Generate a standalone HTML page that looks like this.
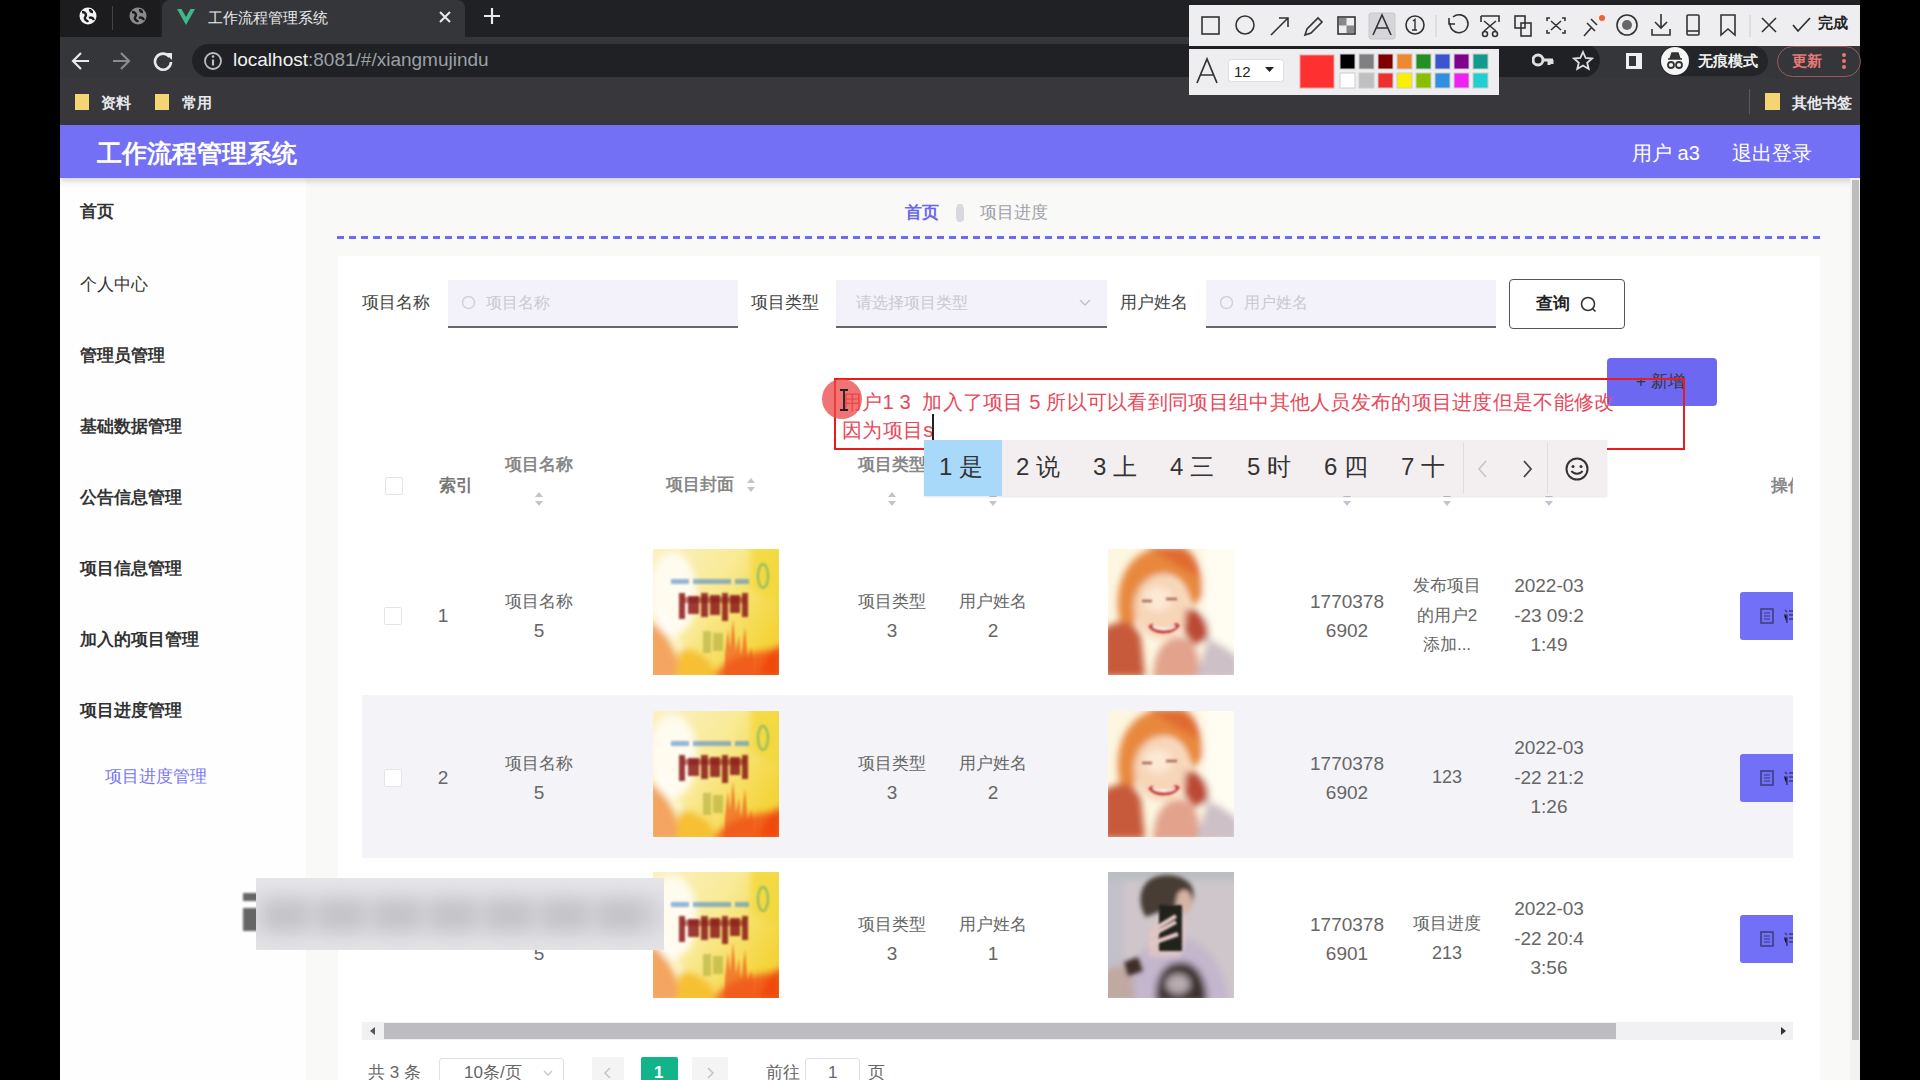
<!DOCTYPE html>
<html><head><meta charset="utf-8">
<style>
*{box-sizing:border-box;margin:0;padding:0}
html,body{width:1920px;height:1080px;overflow:hidden;background:#000;font-family:"Liberation Sans",sans-serif;position:relative}
.a{position:absolute;white-space:nowrap;line-height:1.2}
i{font-style:normal;display:inline-block;width:1em;text-align:center;-webkit-text-stroke-width:.08em}
[style*="bold"] i{-webkit-text-stroke-width:.13em}
.cjk i{-webkit-text-stroke-width:0!important}
.cover,.avw,.avm{width:126px;height:126px}
#tabs{position:absolute;left:60px;top:0;width:1800px;height:37px;background:#202124}
#tool{position:absolute;left:60px;top:37px;width:1800px;height:41px;background:#35363a}
#omni{position:absolute;left:192px;top:44px;width:1408px;height:33px;background:#202124;border-radius:17px}
#bm{position:absolute;left:60px;top:78px;width:1800px;height:47px;background:#38373c}
#hdr{position:absolute;left:60px;top:125px;width:1800px;height:53px;background:#7370f5;box-shadow:0 3px 6px rgba(60,70,50,.22)}
#side{position:absolute;left:60px;top:178px;width:246px;height:902px;background:#fefefe}
#main{position:absolute;left:306px;top:178px;width:1554px;height:902px;background:#f9f9f8}
#card{position:absolute;left:338px;top:256px;width:1482px;height:824px;background:#fff}
</style></head><body>
<div id="tabs"></div>
<div id="tool"></div>
<div id="bm"></div>
<div id="omni"></div>
<div id="side"></div>
<div id="main"></div>
<div id="card"></div>
<div id="hdr"></div>
<svg width="0" height="0" style="position:absolute">
<defs>
<filter id="bl3" x="-20%" y="-20%" width="140%" height="140%"><feGaussianBlur stdDeviation="3.5"/></filter>
<filter id="bl2" x="-20%" y="-20%" width="140%" height="140%"><feGaussianBlur stdDeviation="2"/></filter>
<filter id="bl1" x="-20%" y="-20%" width="140%" height="140%"><feGaussianBlur stdDeviation="0.9"/></filter>
<clipPath id="cp"><rect width="126" height="126"/></clipPath>
<linearGradient id="cg1" x1="0" y1="0" x2="1" y2="0.6"><stop offset="0" stop-color="#fbf1c4"/><stop offset=".5" stop-color="#f9ea96"/><stop offset="1" stop-color="#f4d438"/></linearGradient>
<symbol id="cover" viewBox="0 0 126 126">
<g clip-path="url(#cp)">
<rect width="126" height="126" fill="url(#cg1)"/>
<g filter="url(#bl3)">
<ellipse cx="20" cy="45" rx="24" ry="42" fill="#fffbee"/>
<path d="M-5 72C8 76 22 95 30 130H-5z" fill="#f3a460"/>
<path d="M28 100c15 0 30 8 38 30H22z" fill="#f6c030"/>
<path d="M60 130c8-18 30-28 70-30v30z" fill="#f2661a"/>
<path d="M104 130c5-20 12-30 26-34v34z" fill="#f04810"/>
<path d="M98 -5h35v70c-10-10-25-22-35-25z" fill="#f3d838" opacity=".8"/>
<path d="M8 60c5 15 10 28 20 40" stroke="#fff" stroke-width="6" fill="none" opacity=".7"/>
</g>
<g filter="url(#bl1)">
<path d="M72 106l3-26 2 20 3-30 3 32 3-16 2 22 4-30 3 34 3-14 4 28 3-20 3 24 5-10v40H72z" fill="#f05818" opacity=".7"/>
<path d="M18 30h18v5H18zM40 30h38v5H40zM82 30h14v5H82z" fill="#4a88c8" opacity=".6"/>
<path d="M26 44h6v26h-6zM35 47h11v18H35zM48 44h7v24h-7zM57 46h10v20H57zM69 44h6v28h-6zM77 46h10v18H77zM89 44h6v24h-6z" fill="#8a1a14" opacity=".85"/>
<path d="M30 48h62v6H30z" fill="#8a1a14" opacity=".5"/>
<path d="M50 82h8v22h-8zM60 84h10v18H60z" fill="#a8a838" opacity=".55"/>
<ellipse cx="110" cy="27" rx="5" ry="12" fill="none" stroke="#40a080" stroke-width="2" opacity=".6"/>
</g>
</g>
</symbol>
<symbol id="avw" viewBox="0 0 126 126">
<g clip-path="url(#cp)">
<rect width="126" height="126" fill="#fdf6e0"/>
<g filter="url(#bl3)">
<rect x="96" y="-5" width="35" height="136" fill="#fffcf2"/>
<path d="M10 60C8 20 30 -2 58 -2c25 0 40 18 36 50l-10 10C80 35 70 25 55 25 38 25 30 40 28 60l-2 18-14-2z" fill="#e8883c"/>
<path d="M40 -2h35c10 5 15 15 18 30L75 20z" fill="#e06a30"/>
<ellipse cx="53" cy="58" rx="27" ry="32" fill="#f7d6b8"/>
<ellipse cx="50" cy="50" rx="14" ry="12" fill="#fde8d4"/>
<path d="M-5 80c15-10 30-10 38 8l4 40H-5z" fill="#c65a3a"/>
<path d="M78 60c14 0 25 12 22 30l-14 6-10-14z" fill="#bc4834"/>
<path d="M45 130c0-22 8-40 25-42 18 0 22 20 22 42z" fill="#e2a28c"/>
<path d="M88 130l12-40c12 4 22 12 30 18v22z" fill="#cdc0c6"/>
</g>
<g filter="url(#bl1)">
<path d="M42 76c6 8 22 8 28-1" stroke="#c83838" stroke-width="5" fill="none"/>
<path d="M45 77c5 4 17 4 22 0" stroke="#fff" stroke-width="2" fill="none"/>
<path d="M34 52h10M58 50h11" stroke="#a06858" stroke-width="2.5"/>
</g>
</g>
</symbol>
<symbol id="avm" viewBox="0 0 126 126">
<g clip-path="url(#cp)">
<rect width="126" height="126" fill="#cec6ca"/>
<g filter="url(#bl3)">
<rect x="-5" y="-5" width="136" height="13" fill="#b9bec2"/>
<rect x="-5" y="8" width="20" height="120" fill="#c2c0c8"/>
<path d="M15 130c2-35 20-62 50-66 32 2 52 30 56 66z" fill="#c4b6cc"/>
<path d="M48 130c-2-25 8-40 25-40s26 18 26 40z" fill="#3c322e"/>
<ellipse cx="70" cy="112" rx="12" ry="10" fill="#b8aab0"/>
<path d="M-5 102c8-8 18-10 28-6l4 34H-5z" fill="#c0a49a" opacity=".85"/>
</g>
<g filter="url(#bl2)">
<path d="M38 45c-8-12-8-30 5-38 12-7 32-5 40 6 5 8 2 20-4 28l-10-8z" fill="#463c34"/>
<ellipse cx="76" cy="30" rx="8" ry="12" fill="#d6b4a4"/>
<path d="M42 85c-4-12-2-30 6-36l28-4c4 8 2 30-4 40z" fill="#dcc4c4"/>
<path d="M16 90l14-5 5 14-15 5z" fill="#3e2e28"/>
</g>
<rect x="51" y="33" width="23" height="46" rx="1" fill="#23211f" filter="url(#bl1)"/>
<path d="M42 64l26-14M42 72l28-10M48 56l20-12" stroke="#e4c8c4" stroke-width="4" filter="url(#bl1)"/>
</g>
</symbol>
</defs></svg>
<!-- pinned tabs area -->
<div class="a" style="left:60px;top:0;width:100px;height:37px;background:#1c1c1e"></div>
<svg class="a" style="left:78px;top:6px" width="20" height="20" viewBox="0 0 20 20"><circle cx="10" cy="10" r="8.5" fill="#f2f2f2"/><path d="M4 6c2 0 4 1 4 3s-2 2-1 4 2 1 3 3M12 3c0 2 1 3 3 3M11 12c2-1 4 0 5 2" stroke="#1c1c1e" stroke-width="2.4" fill="none"/></svg>
<div class="a" style="left:112px;top:6px;width:1px;height:24px;background:#444"></div>
<svg class="a" style="left:128px;top:6px" width="20" height="20" viewBox="0 0 20 20"><circle cx="10" cy="10" r="8.5" fill="#8a8a8a"/><path d="M4 6c2 0 4 1 4 3s-2 2-1 4 2 1 3 3M12 3c0 2 1 3 3 3M11 12c2-1 4 0 5 2" stroke="#1c1c1e" stroke-width="2.4" fill="none"/></svg>
<!-- active tab -->
<div class="a" style="left:162px;top:0;width:303px;height:37px;background:#35363a;border-radius:8px 8px 0 0"></div>
<svg class="a" style="left:176px;top:8px" width="20" height="18" viewBox="0 0 20 18"><path d="M1 1h4.5L10 9l4.5-8H19L10 17z" fill="#3fb88a"/></svg>
<div class="a" style="left:208px;top:9px;font-size:15px;color:#e8eaed"><i>工</i><i>作</i><i>流</i><i>程</i><i>管</i><i>理</i><i>系</i><i>统</i></div>
<svg class="a" style="left:438px;top:10px" width="14" height="14" viewBox="0 0 14 14"><path d="M2 2l10 10M12 2L2 12" stroke="#e8eaed" stroke-width="2"/></svg>
<svg class="a" style="left:483px;top:7px" width="18" height="18" viewBox="0 0 18 18"><path d="M9 1v16M1 9h16" stroke="#e8eaed" stroke-width="2.2"/></svg>
<!-- nav icons -->
<svg class="a" style="left:70px;top:50px" width="22" height="22" viewBox="0 0 22 22"><path d="M19 11H4M11 3l-8 8 8 8" stroke="#e8eaed" stroke-width="2.2" fill="none"/></svg>
<svg class="a" style="left:110px;top:50px" width="22" height="22" viewBox="0 0 22 22"><path d="M3 11h15M11 3l8 8-8 8" stroke="#8a8b8e" stroke-width="2.2" fill="none"/></svg>
<svg class="a" style="left:152px;top:50px" width="22" height="22" viewBox="0 0 22 22"><path d="M17.5 7A8 8 0 1 0 19 12" stroke="#e8eaed" stroke-width="2.6" fill="none"/><path d="M13 3h7v7z" fill="#e8eaed"/></svg>
<svg class="a" style="left:202px;top:50px" width="22" height="22" viewBox="0 0 22 22"><circle cx="11" cy="11" r="8" stroke="#bdbdbd" stroke-width="1.8" fill="none"/><path d="M11 9.5v6" stroke="#bdbdbd" stroke-width="2.2"/><circle cx="11" cy="6.5" r="1.3" fill="#bdbdbd"/></svg>
<div class="a" style="left:233px;top:49px;font-size:19px;color:#f1f1f1">localhost<span style="color:#9aa0a6">:8081/#/xiangmujindu</span></div>
<!-- omnibox right icons -->
<svg class="a" style="left:1532px;top:52px" width="22" height="16" viewBox="0 0 22 16"><circle cx="6" cy="8" r="5" stroke="#e0e0e0" stroke-width="3" fill="none"/><path d="M10 8h11M17 8v5M20 8v4" stroke="#e0e0e0" stroke-width="3"/></svg>
<svg class="a" style="left:1572px;top:50px" width="22" height="22" viewBox="0 0 22 22"><path d="M11 2l2.7 6 6.3.5-4.8 4.2 1.5 6.3L11 15.6 5.3 19l1.5-6.3L2 8.5 8.3 8z" stroke="#e0e0e0" stroke-width="1.8" fill="none"/></svg>
<svg class="a" style="left:1624px;top:51px" width="20" height="20" viewBox="0 0 20 20"><rect x="2" y="2" width="16" height="16" fill="#f0f0f0"/><rect x="5" y="5" width="7" height="10" fill="#35363a"/></svg>
<div class="a" style="left:1660px;top:46px;width:108px;height:30px;background:#242528;border-radius:15px"></div>
<svg class="a" style="left:1660px;top:46px" width="30" height="30" viewBox="0 0 30 30"><circle cx="15" cy="15" r="14" fill="#f5f5f5"/><path d="M8 13h14M10 13l2-6h6l2 6" fill="#333" stroke="#333" stroke-width="1.5"/><circle cx="11" cy="19" r="3" stroke="#333" stroke-width="1.8" fill="none"/><circle cx="19" cy="19" r="3" stroke="#333" stroke-width="1.8" fill="none"/></svg>
<div class="a" style="left:1698px;top:52px;font-size:15px;color:#f0f0f0;font-weight:bold"><i>无</i><i>痕</i><i>模</i><i>式</i></div>
<div class="a" style="left:1777px;top:46px;width:84px;height:31px;border:1.5px solid #9a5a5e;border-radius:16px"></div>
<div class="a" style="left:1792px;top:52px;font-size:15px;color:#e87878;font-weight:bold"><i>更</i><i>新</i></div>
<svg class="a" style="left:1840px;top:51px" width="8" height="20" viewBox="0 0 8 20"><circle cx="4" cy="4" r="2" fill="#e87878"/><circle cx="4" cy="10" r="2" fill="#e87878"/><circle cx="4" cy="16" r="2" fill="#e87878"/></svg>
<!-- bookmarks -->
<div class="a" style="left:75px;top:94px;width:14px;height:16px;background:#f3d673"></div>
<div class="a" style="left:101px;top:94px;font-size:15px;color:#e8eaed;font-weight:bold"><i>资</i><i>料</i></div>
<div class="a" style="left:155px;top:94px;width:14px;height:16px;background:#f3d673"></div>
<div class="a" style="left:182px;top:94px;font-size:15px;color:#e8eaed;font-weight:bold"><i>常</i><i>用</i></div>
<div class="a" style="left:1749px;top:89px;width:1px;height:25px;background:#5a5a5e"></div>
<div class="a" style="left:1765px;top:93px;width:15px;height:17px;background:#f3d673"></div>
<div class="a" style="left:1792px;top:94px;font-size:15px;color:#e8eaed;font-weight:bold"><i>其</i><i>他</i><i>书</i><i>签</i></div>
<div class="a" style="left:1189px;top:5px;width:671px;height:41px;background:#eeeef1"></div>
<div class="a" style="left:1189px;top:49px;width:310px;height:46px;background:#eeeef1"></div>
<svg class="a" style="left:1189px;top:5px" width="671" height="41" viewBox="0 0 671 41" fill="none" stroke="#333" stroke-width="1.6">
<rect x="13" y="12" width="17" height="17"/>
<circle cx="56" cy="20" r="9"/>
<path d="M82 30L99 13M90 13h9v9"/>
<path d="M116 30l2-6 11-11 4 4-11 11z"/>
<rect x="149" y="12" width="17" height="17"/><rect x="150" y="13" width="7.5" height="7.5" fill="#888" stroke="none"/><rect x="157.5" y="20.5" width="7.5" height="7.5" fill="#888" stroke="none"/>
<rect x="180" y="8" width="26" height="26" rx="2" fill="#d6d6da" stroke="#c8c8cc" stroke-width="1"/>
<path d="M184 30l9-20 9 20M187 23h12"/>
<circle cx="226" cy="20" r="9"/><path d="M224 16l2-1.5v10M223 25h5" stroke-width="1.4"/>
<path d="M247 10v22" stroke="#ccc" stroke-width="1"/>
<path d="M260 13v6h6M261 18a9 9 0 1 0 3-6"/>
<path d="M292 11h18v6M292 11v6M295 16l12 10M307 16l-12 10"/><circle cx="296" cy="29" r="2.5"/><circle cx="306" cy="29" r="2.5"/>
<rect x="326" y="11" width="10" height="12"/><rect x="332" y="18" width="10" height="13"/>
<path d="M361 13h-3v3M373 13h3v3M361 28h-3v-3M373 28h3v-3M362 16l10 9M372 16l-10 9"/>
<path d="M395 31l8-9M398 18l8 8M402 14l6 6" /><circle cx="413" cy="13" r="3" fill="#f06030" stroke="none"/>
<circle cx="438" cy="20" r="10"/><circle cx="438" cy="20" r="5" fill="#666" stroke="none"/>
<path d="M472 9v14M466 17l6 6 6-6M463 24v6h18v-6"/>
<rect x="498" y="10" width="12" height="20" rx="1"/><path d="M498 26h12"/>
<path d="M532 10h14v20l-7-6-7 6z"/>
<path d="M561 10v22" stroke="#ccc" stroke-width="1"/>
<path d="M573 13l14 14M587 13l-14 14"/>
<path d="M604 20l5 6 12-13" stroke-width="1.8"/>
</svg>
<div class="a" style="left:1818px;top:14px;font-size:15px;color:#222;font-weight:bold"><i>完</i><i>成</i></div>
<svg class="a" style="left:1189px;top:49px" width="310" height="46" viewBox="0 0 310 46">
<path d="M8 34l10-24 10 24M11 26h14" stroke="#333" stroke-width="1.7" fill="none"/>
<rect x="39.5" y="10.5" width="55" height="22" rx="3" fill="#fff" stroke="#ddd"/>
<text x="45" y="28" font-size="15" font-family="Liberation Sans" fill="#222">12</text>
<path d="M76 18h9l-4.5 5z" fill="#222"/>
<rect x="111" y="6" width="34" height="33" fill="#ff3030" stroke="#e8a0a0"/>
<g stroke="#ccc" stroke-width="1">
<rect x="151" y="5" width="15" height="15" fill="#000"/><rect x="170" y="5" width="15" height="15" fill="#808080"/><rect x="189" y="5" width="15" height="15" fill="#800000"/><rect x="208" y="5" width="15" height="15" fill="#f08830"/><rect x="227" y="5" width="15" height="15" fill="#229022"/><rect x="246" y="5" width="15" height="15" fill="#3a55d0"/><rect x="265" y="5" width="15" height="15" fill="#800090"/><rect x="284" y="5" width="15" height="15" fill="#109a90"/>
<rect x="151" y="24" width="15" height="15" fill="#fff"/><rect x="170" y="24" width="15" height="15" fill="#c0c0c0"/><rect x="189" y="24" width="15" height="15" fill="#f03030"/><rect x="208" y="24" width="15" height="15" fill="#f8f000"/><rect x="227" y="24" width="15" height="15" fill="#88c000"/><rect x="246" y="24" width="15" height="15" fill="#3090e0"/><rect x="265" y="24" width="15" height="15" fill="#f020f0"/><rect x="284" y="24" width="15" height="15" fill="#20d0d0"/>
</g>
</svg>
<!-- header -->
<div class="a" style="left:97px;top:138px;font-size:25px;color:#fff;font-weight:bold"><i>工</i><i>作</i><i>流</i><i>程</i><i>管</i><i>理</i><i>系</i><i>统</i></div>
<div class="a" style="left:1632px;top:141px;font-size:20px;color:#fff"><i>用</i><i>户</i> a3</div>
<div class="a" style="left:1732px;top:141px;font-size:20px;color:#fff"><i>退</i><i>出</i><i>登</i><i>录</i></div>
<!-- sidebar -->
<div class="a" style="left:80px;top:202px;font-size:17px;color:#333;font-weight:bold"><i>首</i><i>页</i></div>
<div class="a" style="left:80px;top:275px;font-size:17px;color:#333"><i>个</i><i>人</i><i>中</i><i>心</i></div>
<div class="a" style="left:80px;top:346px;font-size:17px;color:#333;font-weight:bold"><i>管</i><i>理</i><i>员</i><i>管</i><i>理</i></div>
<div class="a" style="left:80px;top:417px;font-size:17px;color:#333;font-weight:bold"><i>基</i><i>础</i><i>数</i><i>据</i><i>管</i><i>理</i></div>
<div class="a" style="left:80px;top:488px;font-size:17px;color:#333;font-weight:bold"><i>公</i><i>告</i><i>信</i><i>息</i><i>管</i><i>理</i></div>
<div class="a" style="left:80px;top:559px;font-size:17px;color:#333;font-weight:bold"><i>项</i><i>目</i><i>信</i><i>息</i><i>管</i><i>理</i></div>
<div class="a" style="left:80px;top:630px;font-size:17px;color:#333;font-weight:bold"><i>加</i><i>入</i><i>的</i><i>项</i><i>目</i><i>管</i><i>理</i></div>
<div class="a" style="left:80px;top:701px;font-size:17px;color:#333;font-weight:bold"><i>项</i><i>目</i><i>进</i><i>度</i><i>管</i><i>理</i></div>
<div class="a" style="left:105px;top:767px;font-size:17px;color:#7a76f0"><i>项</i><i>目</i><i>进</i><i>度</i><i>管</i><i>理</i></div>
<!-- breadcrumb -->
<div class="a" style="left:905px;top:203px;font-size:17px;color:#6d69e8;font-weight:bold"><i>首</i><i>页</i></div>
<svg class="a" style="left:952px;top:202px" width="16" height="22" viewBox="0 0 16 22"><path d="M6 2h4l2 4v12l-3 2H6L4 16V6z" fill="#d8d8de"/></svg>
<div class="a" style="left:980px;top:203px;font-size:17px;color:#a0a0a8"><i>项</i><i>目</i><i>进</i><i>度</i></div>
<div class="a" style="left:337px;top:236px;width:1483px;height:3px;background:repeating-linear-gradient(90deg,#6f6bf0 0 7px,transparent 7px 12px)"></div>
<!-- search form -->
<div class="a" style="left:362px;top:293px;font-size:17px;color:#444"><i>项</i><i>目</i><i>名</i><i>称</i></div>
<div class="a" style="left:448px;top:280px;width:290px;height:48px;background:#f3f2fa;border-bottom:2px solid #666"></div>
<svg class="a" style="left:461px;top:295px" width="16" height="16" viewBox="0 0 16 16"><circle cx="7.5" cy="7.5" r="6" stroke="#d0d0d8" stroke-width="1.5" fill="none"/></svg>
<div class="a" style="left:486px;top:293px;font-size:16px;color:#c9c9d2"><i>项</i><i>目</i><i>名</i><i>称</i></div>
<div class="a" style="left:751px;top:293px;font-size:17px;color:#444"><i>项</i><i>目</i><i>类</i><i>型</i></div>
<div class="a" style="left:836px;top:280px;width:271px;height:48px;background:#f3f2fa;border-bottom:2px solid #666"></div>
<div class="a" style="left:856px;top:293px;font-size:16px;color:#c9c9d2"><i>请</i><i>选</i><i>择</i><i>项</i><i>目</i><i>类</i><i>型</i></div>
<svg class="a" style="left:1079px;top:298px" width="12" height="10" viewBox="0 0 12 10"><path d="M1 2l5 5 5-5" stroke="#c0c0c8" stroke-width="1.4" fill="none"/></svg>
<div class="a" style="left:1120px;top:293px;font-size:17px;color:#444"><i>用</i><i>户</i><i>姓</i><i>名</i></div>
<div class="a" style="left:1206px;top:280px;width:290px;height:48px;background:#f3f2fa;border-bottom:2px solid #666"></div>
<svg class="a" style="left:1219px;top:295px" width="16" height="16" viewBox="0 0 16 16"><circle cx="7.5" cy="7.5" r="6" stroke="#d0d0d8" stroke-width="1.5" fill="none"/></svg>
<div class="a" style="left:1244px;top:293px;font-size:16px;color:#c9c9d2"><i>用</i><i>户</i><i>姓</i><i>名</i></div>
<div class="a" style="left:1509px;top:279px;width:116px;height:50px;background:#fff;border:1.5px solid #555;border-radius:4px"></div>
<div class="a" style="left:1536px;top:294px;font-size:17px;color:#222;font-weight:bold"><i>查</i><i>询</i></div>
<svg class="a" style="left:1579px;top:295px" width="20" height="20" viewBox="0 0 20 20"><circle cx="9" cy="9" r="6.5" stroke="#333" stroke-width="1.6" fill="none"/><path d="M13.5 13.5l3 3" stroke="#333" stroke-width="1.6"/></svg>
<!-- add button -->
<div class="a" style="left:1607px;top:358px;width:110px;height:48px;background:#6c68f2;border-radius:4px"></div>
<div class="a" style="left:1636px;top:372px;font-size:17px;color:#333">+ <span><i>新</i><i>增</i></span></div>
<div class="a" style="left:385px;top:477px;width:18px;height:18px;border:1px solid #e4e4ea;border-radius:2px;background:#fff"></div>
<div class="a" style="left:156px;width:600px;text-align:center;top:476px;font-size:17px;color:#777;font-weight:bold"><i>索</i><i>引</i></div>
<div class="a" style="left:239px;width:600px;text-align:center;top:455px;font-size:17px;color:#888;font-weight:bold"><i>项</i><i>目</i><i>名</i><i>称</i></div>
<svg class="a" style="left:534px;top:491px" width="10" height="16" viewBox="0 0 10 16"><path d="M5 1l4 5H1zM5 15l4-5H1z" fill="#c0c4cc"/></svg>
<div class="a" style="left:400px;width:600px;text-align:center;top:475px;font-size:17px;color:#888;font-weight:bold"><i>项</i><i>目</i><i>封</i><i>面</i></div>
<svg class="a" style="left:746px;top:477px" width="10" height="16" viewBox="0 0 10 16"><path d="M5 1l4 5H1zM5 15l4-5H1z" fill="#c0c4cc"/></svg>
<div class="a" style="left:592px;width:600px;text-align:center;top:455px;font-size:17px;color:#888;font-weight:bold"><i>项</i><i>目</i><i>类</i><i>型</i></div>
<svg class="a" style="left:887px;top:491px" width="10" height="16" viewBox="0 0 10 16"><path d="M5 1l4 5H1zM5 15l4-5H1z" fill="#c0c4cc"/></svg>
<div class="a" style="left:693px;width:600px;text-align:center;top:455px;font-size:17px;color:#888;font-weight:bold"><i>用</i><i>户</i><i>姓</i><i>名</i></div>
<svg class="a" style="left:988px;top:491px" width="10" height="16" viewBox="0 0 10 16"><path d="M5 1l4 5H1zM5 15l4-5H1z" fill="#c0c4cc"/></svg>
<svg class="a" style="left:1342px;top:491px" width="10" height="16" viewBox="0 0 10 16"><path d="M5 1l4 5H1zM5 15l4-5H1z" fill="#c0c4cc"/></svg>
<svg class="a" style="left:1442px;top:491px" width="10" height="16" viewBox="0 0 10 16"><path d="M5 1l4 5H1zM5 15l4-5H1z" fill="#c0c4cc"/></svg>
<svg class="a" style="left:1544px;top:491px" width="10" height="16" viewBox="0 0 10 16"><path d="M5 1l4 5H1zM5 15l4-5H1z" fill="#c0c4cc"/></svg>
<div class="a" style="left:1771px;top:476px;width:22px;overflow:hidden;font-size:17px;color:#888;font-weight:bold"><i>操</i><i>作</i></div>
<div class="a" style="left:384px;top:607px;width:18px;height:18px;border:1px solid #e4e4ea;border-radius:2px;background:#fff"></div>
<div class="a " style="left:143px;width:600px;text-align:center;top:605px;font-size:19px;color:#666;">1</div>
<div class="a" style="left:239px;width:600px;text-align:center;top:592px;font-size:17px;color:#666;"><i>项</i><i>目</i><i>名</i><i>称</i></div>
<div class="a " style="left:239px;width:600px;text-align:center;top:620px;font-size:19px;color:#666;">5</div>
<svg class="a" style="left:653px;top:549px" width="126" height="126"><use href="#cover"/></svg>
<div class="a" style="left:592px;width:600px;text-align:center;top:592px;font-size:17px;color:#666;"><i>项</i><i>目</i><i>类</i><i>型</i></div>
<div class="a " style="left:592px;width:600px;text-align:center;top:620px;font-size:19px;color:#666;">3</div>
<div class="a" style="left:693px;width:600px;text-align:center;top:592px;font-size:17px;color:#666;"><i>用</i><i>户</i><i>姓</i><i>名</i></div>
<div class="a " style="left:693px;width:600px;text-align:center;top:620px;font-size:19px;color:#666;">2</div>
<svg class="a" style="left:1108px;top:549px" width="126" height="126"><use href="#avw"/></svg>
<div class="a " style="left:1047px;width:600px;text-align:center;top:591px;font-size:19px;color:#666;">1770378</div>
<div class="a " style="left:1047px;width:600px;text-align:center;top:620px;font-size:19px;color:#666;">6902</div>
<div class="a" style="left:1147px;width:600px;text-align:center;top:576px;font-size:17px;color:#666;"><i>发</i><i>布</i><i>项</i><i>目</i></div>
<div class="a" style="left:1147px;width:600px;text-align:center;top:606px;font-size:17px;color:#666;"><i>的</i><i>用</i><i>户</i>2</div>
<div class="a" style="left:1147px;width:600px;text-align:center;top:635px;font-size:17px;color:#666;"><i>添</i><i>加</i>...</div>
<div class="a " style="left:1249px;width:600px;text-align:center;top:575px;font-size:19px;color:#666;">2022-03</div>
<div class="a " style="left:1249px;width:600px;text-align:center;top:605px;font-size:19px;color:#666;">-23 09:2</div>
<div class="a " style="left:1249px;width:600px;text-align:center;top:634px;font-size:19px;color:#666;">1:49</div>
<div class="a" style="left:1740px;top:592px;width:53px;height:48px;background:#7270f6;border-radius:3px 0 0 3px"></div>
<svg class="a" style="left:1760px;top:607px" width="33" height="18" viewBox="0 0 33 18"><rect x="1" y="2" width="12" height="14" fill="none" stroke="#3c3a78" stroke-width="1.5"/><path d="M4 6h6M4 9h6M4 12h6" stroke="#3c3a78" stroke-width="1"/><path d="M25 3l2 2M24 8h3v8M29 4h4M29 8h4M29 12h4" stroke="#3c3a78" stroke-width="1.5"/></svg>
<div class="a" style="left:362px;top:695px;width:1431px;height:163px;background:#f4f4f8"></div>
<div class="a" style="left:384px;top:769px;width:18px;height:18px;border:1px solid #e4e4ea;border-radius:2px;background:#fff"></div>
<div class="a " style="left:143px;width:600px;text-align:center;top:767px;font-size:19px;color:#666;">2</div>
<div class="a" style="left:239px;width:600px;text-align:center;top:754px;font-size:17px;color:#666;"><i>项</i><i>目</i><i>名</i><i>称</i></div>
<div class="a " style="left:239px;width:600px;text-align:center;top:782px;font-size:19px;color:#666;">5</div>
<svg class="a" style="left:653px;top:711px" width="126" height="126"><use href="#cover"/></svg>
<div class="a" style="left:592px;width:600px;text-align:center;top:754px;font-size:17px;color:#666;"><i>项</i><i>目</i><i>类</i><i>型</i></div>
<div class="a " style="left:592px;width:600px;text-align:center;top:782px;font-size:19px;color:#666;">3</div>
<div class="a" style="left:693px;width:600px;text-align:center;top:754px;font-size:17px;color:#666;"><i>用</i><i>户</i><i>姓</i><i>名</i></div>
<div class="a " style="left:693px;width:600px;text-align:center;top:782px;font-size:19px;color:#666;">2</div>
<svg class="a" style="left:1108px;top:711px" width="126" height="126"><use href="#avw"/></svg>
<div class="a " style="left:1047px;width:600px;text-align:center;top:753px;font-size:19px;color:#666;">1770378</div>
<div class="a " style="left:1047px;width:600px;text-align:center;top:782px;font-size:19px;color:#666;">6902</div>
<div class="a " style="left:1147px;width:600px;text-align:center;top:767px;font-size:18px;color:#666;">123</div>
<div class="a " style="left:1249px;width:600px;text-align:center;top:737px;font-size:19px;color:#666;">2022-03</div>
<div class="a " style="left:1249px;width:600px;text-align:center;top:767px;font-size:19px;color:#666;">-22 21:2</div>
<div class="a " style="left:1249px;width:600px;text-align:center;top:796px;font-size:19px;color:#666;">1:26</div>
<div class="a" style="left:1740px;top:754px;width:53px;height:48px;background:#7270f6;border-radius:3px 0 0 3px"></div>
<svg class="a" style="left:1760px;top:769px" width="33" height="18" viewBox="0 0 33 18"><rect x="1" y="2" width="12" height="14" fill="none" stroke="#3c3a78" stroke-width="1.5"/><path d="M4 6h6M4 9h6M4 12h6" stroke="#3c3a78" stroke-width="1"/><path d="M25 3l2 2M24 8h3v8M29 4h4M29 8h4M29 12h4" stroke="#3c3a78" stroke-width="1.5"/></svg>
<div class="a" style="left:384px;top:930px;width:18px;height:18px;border:1px solid #e4e4ea;border-radius:2px;background:#fff"></div>
<div class="a " style="left:143px;width:600px;text-align:center;top:928px;font-size:19px;color:#666;">3</div>
<div class="a" style="left:239px;width:600px;text-align:center;top:915px;font-size:17px;color:#666;"><i>项</i><i>目</i><i>名</i><i>称</i></div>
<div class="a " style="left:239px;width:600px;text-align:center;top:943px;font-size:19px;color:#666;">5</div>
<svg class="a" style="left:653px;top:872px" width="126" height="126"><use href="#cover"/></svg>
<div class="a" style="left:592px;width:600px;text-align:center;top:915px;font-size:17px;color:#666;"><i>项</i><i>目</i><i>类</i><i>型</i></div>
<div class="a " style="left:592px;width:600px;text-align:center;top:943px;font-size:19px;color:#666;">3</div>
<div class="a" style="left:693px;width:600px;text-align:center;top:915px;font-size:17px;color:#666;"><i>用</i><i>户</i><i>姓</i><i>名</i></div>
<div class="a " style="left:693px;width:600px;text-align:center;top:943px;font-size:19px;color:#666;">1</div>
<svg class="a" style="left:1108px;top:872px" width="126" height="126"><use href="#avm"/></svg>
<div class="a " style="left:1047px;width:600px;text-align:center;top:914px;font-size:19px;color:#666;">1770378</div>
<div class="a " style="left:1047px;width:600px;text-align:center;top:943px;font-size:19px;color:#666;">6901</div>
<div class="a" style="left:1147px;width:600px;text-align:center;top:914px;font-size:17px;color:#666;"><i>项</i><i>目</i><i>进</i><i>度</i></div>
<div class="a " style="left:1147px;width:600px;text-align:center;top:943px;font-size:18px;color:#666;">213</div>
<div class="a " style="left:1249px;width:600px;text-align:center;top:898px;font-size:19px;color:#666;">2022-03</div>
<div class="a " style="left:1249px;width:600px;text-align:center;top:928px;font-size:19px;color:#666;">-22 20:4</div>
<div class="a " style="left:1249px;width:600px;text-align:center;top:957px;font-size:19px;color:#666;">3:56</div>
<div class="a" style="left:1740px;top:915px;width:53px;height:48px;background:#7270f6;border-radius:3px 0 0 3px"></div>
<svg class="a" style="left:1760px;top:930px" width="33" height="18" viewBox="0 0 33 18"><rect x="1" y="2" width="12" height="14" fill="none" stroke="#3c3a78" stroke-width="1.5"/><path d="M4 6h6M4 9h6M4 12h6" stroke="#3c3a78" stroke-width="1"/><path d="M25 3l2 2M24 8h3v8M29 4h4M29 8h4M29 12h4" stroke="#3c3a78" stroke-width="1.5"/></svg>
<!-- annotation -->
<div class="a" style="left:834px;top:378px;width:851px;height:72px;border:2px solid #e81c1c"></div>
<div class="a" style="left:842px;top:388px;font-size:20.3px;color:#e8485a;line-height:28px;white-space:pre"><i>用</i><i>户</i>1 3  <i>加</i><i>入</i><i>了</i><i>项</i><i>目</i> 5 <i>所</i><i>以</i><i>可</i><i>以</i><i>看</i><i>到</i><i>同</i><i>项</i><i>目</i><i>组</i><i>中</i><i>其</i><i>他</i><i>人</i><i>员</i><i>发</i><i>布</i><i>的</i><i>项</i><i>目</i><i>进</i><i>度</i><i>但</i><i>是</i><i>不</i><i>能</i><i>修</i><i>改</i><br><i>因</i><i>为</i><i>项</i><i>目</i>s</div>
<div class="a" style="left:932px;top:414px;width:2px;height:26px;background:#222"></div>
<div class="a" style="left:822px;top:379px;width:40px;height:40px;border-radius:50%;background:rgba(236,70,70,.75)"></div>
<svg class="a" style="left:838px;top:388px" width="12" height="24" viewBox="0 0 12 24"><path d="M2 2h8M6 2v20M2 22h8" stroke="#222" stroke-width="1.8"/></svg>
<!-- IME -->
<div class="a" style="left:924px;top:440px;width:683px;height:56px;background:#f3eff1;box-shadow:0 1px 2px rgba(0,0,0,.1)"></div>
<div class="a" style="left:924px;top:440px;width:78px;height:56px;background:#a9d9f9"></div>
<div class="a" style="left:1463px;top:442px;width:1px;height:52px;background:#e2dde0"></div>
<div class="a" style="left:1547px;top:442px;width:1px;height:52px;background:#e2dde0"></div>
<div class="a" style="left:939px;top:453px;font-size:24px;color:#333;word-spacing:0">1 <i>是</i></div>
<div class="a" style="left:1016px;top:453px;font-size:24px;color:#333">2 <i>说</i></div>
<div class="a" style="left:1093px;top:453px;font-size:24px;color:#333">3 <i>上</i></div>
<div class="a" style="left:1170px;top:453px;font-size:24px;color:#333">4 <i>三</i></div>
<div class="a" style="left:1247px;top:453px;font-size:24px;color:#333">5 <i>时</i></div>
<div class="a" style="left:1324px;top:453px;font-size:24px;color:#333">6 <i>四</i></div>
<div class="a" style="left:1401px;top:453px;font-size:24px;color:#333">7 <i>十</i></div>
<svg class="a" style="left:1476px;top:459px" width="14" height="20" viewBox="0 0 14 20"><path d="M10 2L3 10l7 8" stroke="#c8c4c8" stroke-width="1.6" fill="none"/></svg>
<svg class="a" style="left:1520px;top:459px" width="14" height="20" viewBox="0 0 14 20"><path d="M4 2l7 8-7 8" stroke="#444" stroke-width="1.8" fill="none"/></svg>
<svg class="a" style="left:1564px;top:456px" width="26" height="26" viewBox="0 0 26 26"><circle cx="13" cy="13" r="10.5" stroke="#333" stroke-width="2" fill="none"/><circle cx="9" cy="10.5" r="1.5" fill="#333"/><circle cx="17" cy="10.5" r="1.5" fill="#333"/><path d="M7.5 15c2 3.5 9 3.5 11 0" stroke="#333" stroke-width="2" fill="none"/></svg>
<!-- blurred subtitle -->
<div class="a" style="left:243px;top:893px;width:16px;height:38px;background:linear-gradient(#666 0 20%,transparent 20% 40%,#666 40% 100%);filter:blur(1.2px)"></div>
<div class="a" style="left:256px;top:878px;width:408px;height:72px;background:linear-gradient(#e6e5e8,#dfdee2 50%,#e3e2e5);overflow:hidden">
<div style="position:absolute;left:6px;top:20px;width:396px;height:34px;background:repeating-linear-gradient(90deg,#c4c3c8 0 46px,#d6d5d9 46px 56px);filter:blur(9px)"></div>
</div>
<!-- h scrollbar -->
<div class="a" style="left:362px;top:1022px;width:1431px;height:18px;background:#f1f1f3"></div>
<div class="a" style="left:384px;top:1023px;width:1232px;height:16px;background:#bcbcc1"></div>
<svg class="a" style="left:368px;top:1026px" width="10" height="10" viewBox="0 0 10 10"><path d="M7 1L2 5l5 4z" fill="#555"/></svg>
<svg class="a" style="left:1778px;top:1026px" width="10" height="10" viewBox="0 0 10 10"><path d="M3 1l5 4-5 4z" fill="#333"/></svg>
<!-- pagination -->
<div class="a" style="left:368px;top:1063px;font-size:17px;color:#666"><span><i>共</i></span> 3 <span><i>条</i></span></div>
<div class="a" style="left:439px;top:1058px;width:125px;height:40px;border:1px solid #dcdfe6;border-radius:3px;background:#fff"></div>
<div class="a" style="left:464px;top:1063px;font-size:17px;color:#666">10<i>条</i>/<i>页</i></div>
<svg class="a" style="left:542px;top:1070px" width="12" height="8" viewBox="0 0 12 8"><path d="M2 1l4 4 4-4" stroke="#c0c4cc" stroke-width="1.3" fill="none"/></svg>
<div class="a" style="left:592px;top:1057px;width:32px;height:40px;background:#f4f4f5;border-radius:2px"></div>
<svg class="a" style="left:602px;top:1066px" width="12" height="14" viewBox="0 0 12 14"><path d="M8 2L3 7l5 5" stroke="#c0c4cc" stroke-width="1.5" fill="none"/></svg>
<div class="a" style="left:641px;top:1057px;width:37px;height:40px;background:#13b48a;border-radius:2px"></div>
<div class="a" style="left:654px;top:1063px;font-size:17px;color:#fff;font-weight:bold">1</div>
<div class="a" style="left:692px;top:1057px;width:36px;height:40px;background:#f4f4f5;border-radius:2px"></div>
<svg class="a" style="left:704px;top:1066px" width="12" height="14" viewBox="0 0 12 14"><path d="M4 2l5 5-5 5" stroke="#c0c4cc" stroke-width="1.5" fill="none"/></svg>
<div class="a" style="left:766px;top:1063px;font-size:17px;color:#666"><i>前</i><i>往</i></div>
<div class="a" style="left:805px;top:1058px;width:55px;height:40px;border:1px solid #dcdfe6;border-radius:3px;background:#fff"></div>
<div class="a" style="left:828px;top:1063px;font-size:17px;color:#666">1</div>
<div class="a" style="left:868px;top:1063px;font-size:17px;color:#666"><i>页</i></div>
<!-- page scrollbar -->
<div class="a" style="left:1850px;top:178px;width:10px;height:902px;background:#f2f2f2"></div>
<div class="a" style="left:1852px;top:180px;width:7px;height:860px;background:#bdbdbd"></div>
<script>(function(){var s=document.createElement('span');s.style.cssText='position:absolute;visibility:hidden;font-size:100px;white-space:nowrap;letter-spacing:0;font-family:"Liberation Sans",sans-serif';s.textContent='\u4e2d\u4e2d';document.body.appendChild(s);if(s.getBoundingClientRect().width>170)document.documentElement.className='cjk';s.parentNode.removeChild(s);})();</script>

</body></html>
